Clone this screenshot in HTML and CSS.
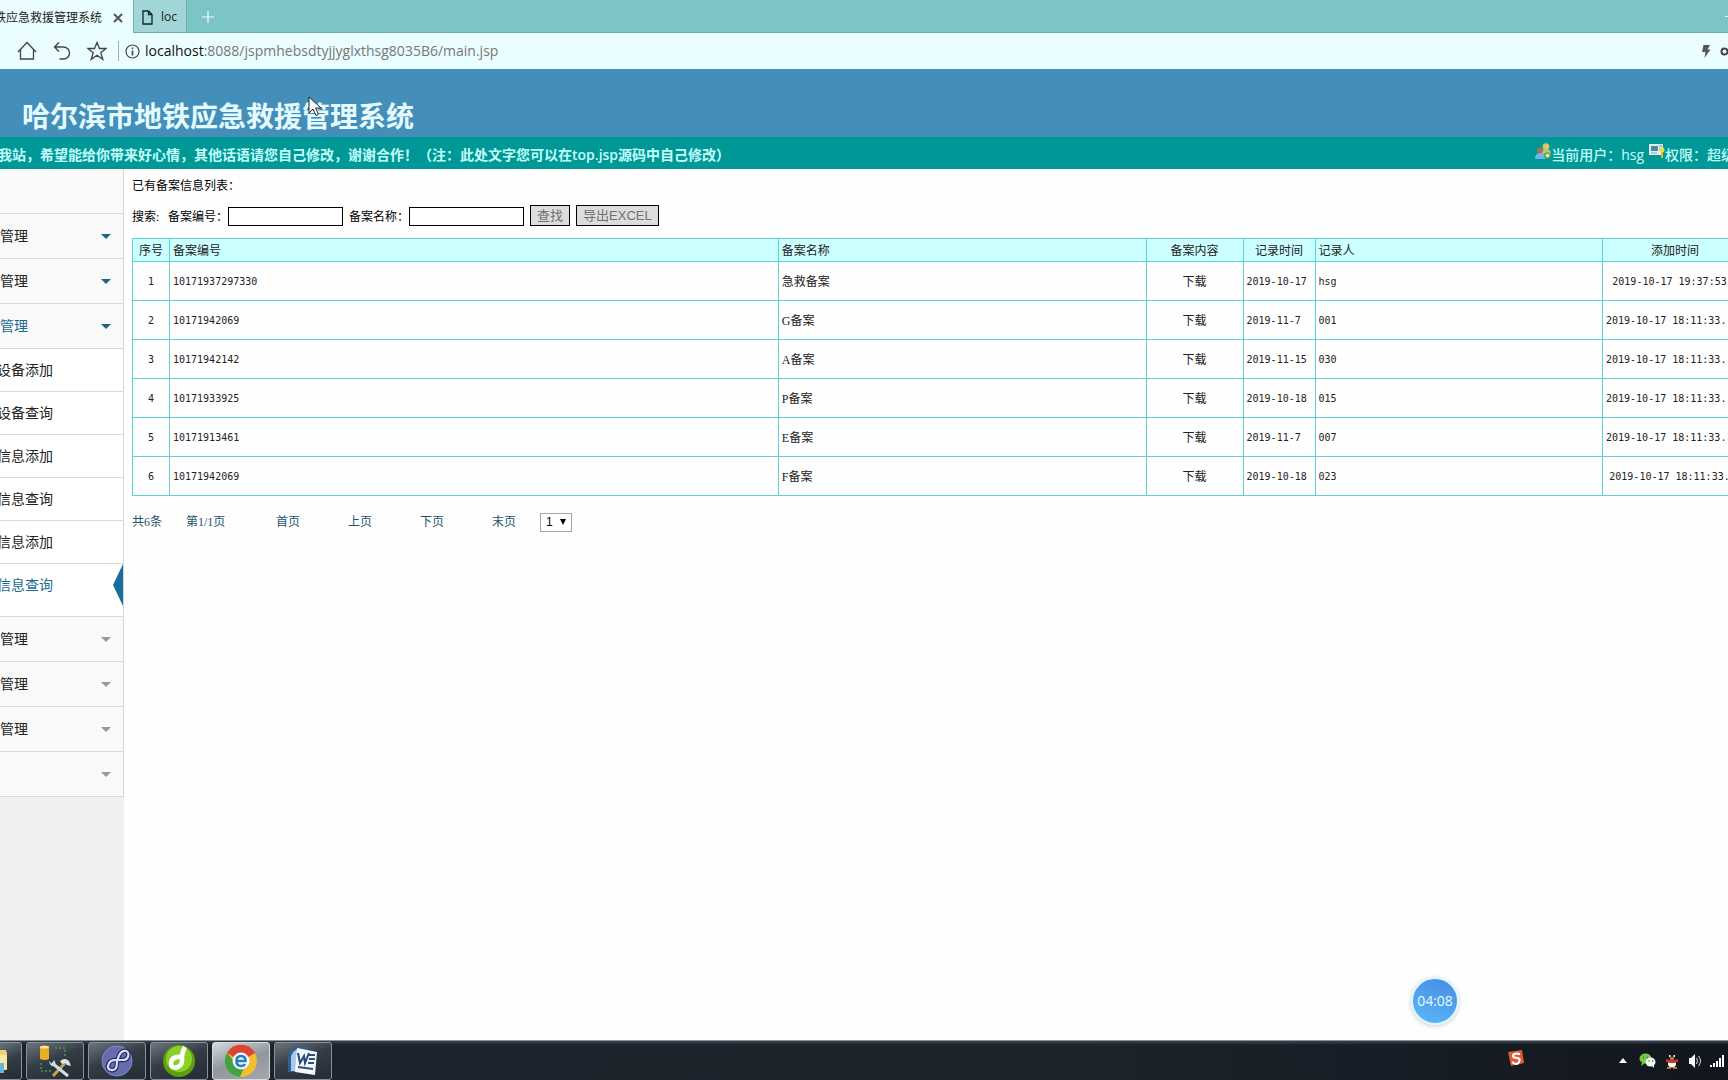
FILE: index.html
```html
<!DOCTYPE html>
<html lang="zh-CN">
<head>
<meta charset="utf-8">
<title>哈尔滨市地铁应急救援管理系统</title>
<link rel="stylesheet" href="styles.css">
</head>
<body>
<div class="tabs">
  <div class="tab tab-active"><span>铁应急救援管理系统</span>
    <button class="icon-btn" aria-label="关闭"><svg width="10" height="10" viewBox="0 0 10 10"><path d="M1 1l8 8M9 1l-8 8" stroke="#555" stroke-width="2"/></svg></button>
  </div>
  <div class="tab tab-other">
    <svg width="11" height="15" viewBox="0 0 11 15"><path d="M1 1h5.500l3.500 3.500v9.500h-9zM6.500 1v3.500h3.500" fill="none" stroke="#123" stroke-width="1.300"/></svg>
    <span>loc</span>
  </div>
  <button class="icon-btn new-tab" aria-label="新标签页"><svg width="12" height="12" viewBox="0 0 12 12"><path d="M6 0v12M0 6h12" stroke="#e8ffff" stroke-width="1.200"/></svg></button>
  <span class="win-min"></span>
</div>
<div class="toolbar">
  <button class="icon-btn" aria-label="主页"><svg width="20" height="20" viewBox="0 0 20 20"><path d="M1 11l9-9.500 9 9.500M3.500 9v9h13v-9" fill="none" stroke="#444" stroke-width="1.300"/></svg></button>
  <button class="icon-btn" aria-label="返回"><svg width="20" height="20" viewBox="0 0 20 20"><path d="M7 1.500l-4.500 4.500 4.500 4.500M3 6h8.500a6 6 0 0 1 0 12h-4" fill="none" stroke="#444" stroke-width="1.400"/></svg></button>
  <button class="icon-btn" aria-label="收藏"><svg width="20" height="20" viewBox="0 0 20 20"><path d="M10 1.500l2.500 6h6.500l-5.200 4.200 2 6.600-5.800-4-5.800 4 2-6.600L1 7.500h6.500z" fill="none" stroke="#444" stroke-width="1.300"/></svg></button>
  <div class="address">
    <svg width="15" height="15" viewBox="0 0 15 15"><circle cx="7.500" cy="7.500" r="6.500" fill="none" stroke="#444" stroke-width="1.200"/><path d="M7.500 6.500v5M7.500 3.500v1.600" stroke="#444" stroke-width="1.600"/></svg>
    <span class="url"><b>localhost</b>:8088/jspmhebsdtyjjyglxthsg8035B6/main.jsp</span>
  </div>
  <div class="extensions">
    <svg width="10" height="15" viewBox="0 0 10 15"><path d="M2.500 1h6.500l-2.500 4.500h3l-6 8.500 1-6h-3.500z" fill="#555"/></svg>
    <svg width="9" height="9" viewBox="0 0 9 9"><circle cx="4.500" cy="4.500" r="3" fill="none" stroke="#444" stroke-width="2"/></svg>
  </div>
</div>
<header class="banner"><h1>哈尔滨市地铁应急救援管理系统</h1></header>
<div class="notice">
  <p class="welcome">我站，希望能给你带来好心情，其他话语请您自己修改，谢谢合作<span class="punct">！</span>（注<span class="punct">：</span>此处文字您可以在top.jsp源码中自己修改）</p>
  <p class="user">
    <svg width="16" height="17" viewBox="0 0 16 17"><circle cx="11" cy="3.500" r="3.300" fill="#dcc46a"/><path d="M6 11q0-5 5-5t5 5z" fill="#c9c078"/><circle cx="5" cy="7.500" r="3" fill="#ad7048"/><path d="M0 16q0-6 5-6t5 6z" fill="#6db3ee"/><circle cx="12.500" cy="12.500" r="3.300" fill="#5c9e43"/><path d="M12.500 10.500v4M10.500 12.500h4" stroke="#fff" stroke-width="1.300"/></svg><span>当前用户<span class="punct">：</span>hsg</span>
    <svg class="perm" width="16" height="17" viewBox="0 0 16 17"><path d="M0 1h14v11h-14z" fill="#e0f0f4"/><path d="M2 3h7v5h-7z" fill="#4c87a8"/><path d="M2 10h6" stroke="#8aa"/><path d="M10 3h3M10 6h2" stroke="#698"/><circle cx="13" cy="7" r="2.500" fill="#f3dc45"/><path d="M12 9h2v6h-2z" fill="#e4bd23"/></svg><span>权限<span class="punct">：</span>超级</span>
  </p>
</div>
<div class="body">
  <nav class="side">
    <ul class="menu">
      <li class="group"></li>
      <li class="group open"><a href="#">管理</a></li>
      <li class="group open"><a href="#">管理</a></li>
      <li class="group open current"><a href="#">管理</a></li>
      <li class="sub"><a href="#">设备添加</a></li>
      <li class="sub"><a href="#">设备查询</a></li>
      <li class="sub"><a href="#">信息添加</a></li>
      <li class="sub"><a href="#">信息查询</a></li>
      <li class="sub"><a href="#">信息添加</a></li>
      <li class="sub current last"><a href="#">信息查询</a></li>
      <li class="group shut"><a href="#">管理</a></li>
      <li class="group shut"><a href="#">管理</a></li>
      <li class="group shut"><a href="#">管理</a></li>
      <li class="group shut"></li>
    </ul>
  </nav>
  <main>
    <p class="list-title">已有备案信息列表：</p>
    <form class="search">
      <span class="lead">搜索:</span>
      <label for="bh">备案编号：</label><input id="bh" type="text">
      <label for="mc">备案名称：</label><input id="mc" type="text">
      <button type="button">查找</button>
      <button type="button">导出EXCEL</button>
    </form>
    <table>
      <colgroup><col class="c-no"><col class="c-code"><col><col class="c-file"><col class="c-date"><col class="c-person"><col class="c-time"></colgroup>
      <thead><tr><th class="mid">序号</th><th>备案编号</th><th>备案名称</th><th class="mid">备案内容</th><th class="mid">记录时间</th><th>记录人</th><th class="mid">添加时间</th></tr></thead>
      <tbody>
        <tr><td class="num mid">1</td><td class="num">10171937297330</td><td>急救备案</td><td class="mid"><a href="#">下载</a></td><td class="num">2019-10-17</td><td class="num">hsg</td><td class="num mid stamp">2019-10-17 19:37:53</td></tr>
        <tr><td class="num mid">2</td><td class="num">10171942069</td><td>G备案</td><td class="mid"><a href="#">下载</a></td><td class="num">2019-11-7</td><td class="num">001</td><td class="num">2019-10-17 18:11:33.</td></tr>
        <tr><td class="num mid">3</td><td class="num">10171942142</td><td>A备案</td><td class="mid"><a href="#">下载</a></td><td class="num">2019-11-15</td><td class="num">030</td><td class="num">2019-10-17 18:11:33.</td></tr>
        <tr><td class="num mid">4</td><td class="num">10171933925</td><td>P备案</td><td class="mid"><a href="#">下载</a></td><td class="num">2019-10-18</td><td class="num">015</td><td class="num">2019-10-17 18:11:33.</td></tr>
        <tr><td class="num mid">5</td><td class="num">10171913461</td><td>E备案</td><td class="mid"><a href="#">下载</a></td><td class="num">2019-11-7</td><td class="num">007</td><td class="num">2019-10-17 18:11:33.</td></tr>
        <tr><td class="num mid">6</td><td class="num">10171942069</td><td>F备案</td><td class="mid"><a href="#">下载</a></td><td class="num">2019-10-18</td><td class="num">023</td><td class="num mid stamp">2019-10-17 18:11:33.</td></tr>
      </tbody>
    </table>
    <div class="pager">
      <span class="total">共6条</span><span class="page-no">第1/1页</span>
      <a href="#">首页</a><a href="#">上页</a><a href="#">下页</a><a href="#">末页</a>
      <span class="page-pick"><select aria-label="页码"><option>1</option></select></span>
    </div>
  </main>
</div>
<footer class="taskbar">
  <button class="task task-first" aria-label="资源管理器"><svg width="10" height="30" viewBox="0 0 10 30"><path d="M0 4h8l1 3v17h-9z" fill="#eed37c"/><path d="M0 9h9v14h-9z" fill="#f8e8aa"/><path d="M0 17h6v10h-6z" fill="#65b6d8"/></svg></button>
  <button class="task" aria-label="工具"><svg width="36" height="34" viewBox="0 0 36 34"><path d="M3 3h9v12q-4 2-9 0z" fill="#e9ae27"/><ellipse cx="7.500" cy="3" rx="4.500" ry="1.500" fill="#ffe28b"/><path d="M18 4h10v8M4 19v8h10" fill="none" stroke="#4a9b40" stroke-width="1.500" stroke-dasharray="2 2"/><path d="M16 32l12-13" stroke="#c4a24c" stroke-width="3"/><path d="M15 19l16 13" stroke="#cfe0ed" stroke-width="3"/><path d="M23 17q5-4 9 0l2 5-4-1-2-2-3 1z" fill="#d6e4ec"/><path d="M12 17l3 3 2-4q3 4 0 6-4 1-5-5z" fill="#cfe0ed"/></svg></button>
  <button class="task" aria-label="开发工具"><svg width="34" height="34" viewBox="0 0 34 34"><circle cx="17" cy="17" r="15" fill="#656cae" stroke="#858dce"/><path d="M17 18C19 9 22 6 26 7s3 9-3 9-9-1-12 1-5 8 0 9 6-3 6-8z" fill="none" stroke="#252c61" stroke-width="4.500"/><path d="M17 18C19 9 22 6 26 7s3 9-3 9-9-1-12 1-5 8 0 9 6-3 6-8z" fill="none" stroke="#d5dbf5" stroke-width="2.200"/></svg></button>
  <button class="task" aria-label="Dreamweaver"><svg width="34" height="34" viewBox="0 0 34 34"><circle cx="17" cy="17" r="16" fill="#5ea00b"/><circle cx="17" cy="15" r="13" fill="#8bd028"/><path d="M23 3q-3 5-3 11M19 13q-9-1-10 6 0 6 7 4 5-2 4-10" fill="none" stroke="#fff" stroke-width="4.500"/></svg></button>
  <button class="task task-active" aria-label="浏览器"><svg width="34" height="34" viewBox="0 0 34 34"><circle cx="17" cy="17" r="16" fill="#f1be32"/><path d="M17 17L3 9A16 16 0 0 1 31 9z" fill="#dc4534"/><path d="M3 9A16 16 0 0 0 16 33l5-12-11-4z" fill="#43a344"/><path d="M17 9h14l-1-2-6-5z" fill="#dc4534"/><circle cx="17" cy="17" r="8.500" fill="#eef6fb"/><path d="M12.500 17h9q0-5-4.500-5t-4.500 5 4.500 5q3 0 4-2" fill="none" stroke="#267fb9" stroke-width="2.500"/></svg></button>
  <button class="task" aria-label="Word"><svg width="34" height="34" viewBox="0 0 34 34"><path d="M2 28V12Q4 2 14 3h8v25z" fill="#326093"/><path d="M5 27V13q2-8 9-8L10 27z" fill="#a9c9e8"/><path d="M11 4l20 4-2 23-20-3z" fill="#f4f8fc"/><path d="M23 11h6M23 15h6M22 19h6M12 23l15 2" stroke="#2c4f82" stroke-width="2"/><path d="M12 9l2 10 4-7 1 7 4-10" fill="none" stroke="#244878" stroke-width="2"/></svg></button>
  <div class="tray">
    <svg class="ime" width="18" height="18" viewBox="0 0 18 18"><path d="M1 3l14-2 2 13-13 3z" fill="#dc5c35"/><path d="M13 5q-7-1-7 1.500t4 2.500 2 4-7 0" fill="none" stroke="#fff" stroke-width="2.200"/></svg>
    <svg class="more" width="8" height="5" viewBox="0 0 8 5"><path d="M0 5l4-5 4 5z" fill="#fff"/></svg>
    <svg width="17" height="15" viewBox="0 0 17 15"><ellipse cx="6.500" cy="5.500" rx="6" ry="5" fill="#75cb44"/><path d="M3 9l-1 4 4-3z" fill="#75cb44"/><ellipse cx="11.500" cy="9" rx="5" ry="4.500" fill="#eef6ee"/><path d="M12 12l3 3v-4z" fill="#eef6ee"/><path d="M4 4.500h1M8 4.500h1M9.500 8h1M13 8h1" stroke="#365" stroke-width="1.500"/></svg>
    <svg width="16" height="17" viewBox="0 0 16 17"><path d="M4 7q-1-7 4-7t4 7l3 6-3 1q-4 3-8 0l-3-1z" fill="#151515"/><ellipse cx="8" cy="11.500" rx="4" ry="4" fill="#fff"/><path d="M2 7q6 2 12 0v3q-6 2-12 0z" fill="#c62f25"/><path d="M5 4h1.500M9.500 4H11" stroke="#fff" stroke-width="2"/><path d="M6 6h4M3 16h4M9 16h4" stroke="#eb9c29" stroke-width="1.600"/></svg>
    <svg width="14" height="14" viewBox="0 0 14 14"><path d="M1 4h2l4-4v14l-4-4h-2z" fill="#fff"/><path d="M8.500 4q2 3 0 6M10.500 2q4 5 0 10" fill="none" stroke="#ddd"/></svg>
    <svg width="15" height="12" viewBox="0 0 15 12"><path d="M1 10v2M4 8v4M7 6v6M10 3v9M13 0v12" stroke="#fff" stroke-width="2"/></svg>
  </div>
</footer>
<div class="timer">04:08</div>
<svg class="cursor" width="14" height="21" viewBox="0 0 14 21"><path d="M1 1v16l4-4 3 6.500 2.500-1.200-3-6.300h5.500z" fill="#fff" stroke="#223" stroke-width="1"/></svg>
</body>
</html>
```
FILE: styles.css
```css
* { box-sizing: border-box; }
body {
  margin: 0;
  min-height: 100vh;
  display: flex;
  flex-direction: column;
  overflow: hidden;
  background: #fefefe;
  color: #222;
  font: 12px/18px "Liberation Serif", "Noto Sans CJK SC", sans-serif;
}
p, h1, ul { margin: 0; padding: 0; }
a { color: inherit; text-decoration: none; }
svg { display: block; flex: none; }
.icon-btn { padding: 0; border: 0; background: none; }
.punct { font-family: "Noto Sans CJK JP", sans-serif; }

/* browser tabs */
.tabs {
  display: flex;
  height: 33px;
  background: #7cc5c5;
  border-bottom: 1px solid #6faead;
  font-family: "Open Sans", "Noto Sans CJK SC", sans-serif;
}
.tab { display: flex; align-items: center; padding-top: 2px; }
.tab-active {
  height: 33px;
  width: 139px;
  margin-left: -6px;
  gap: 11px;
  background: #eafeff;
  white-space: nowrap;
}
.tab-other {
  width: 54px;
  padding-left: 8px;
  gap: 8px;
  background: #a0d6d5;
  border: solid #6faead;
  border-width: 0 1px;
}
.new-tab { margin-left: 15px; padding-top: 2px; }
.win-min { width: 3px; height: 1px; margin: 16px 0 0 auto; background: #fff; }

/* address bar */
.toolbar {
  display: flex;
  align-items: center;
  height: 36px;
  padding-left: 17px;
  gap: 15px;
  background: #eafeff;
}
.address {
  display: flex;
  align-items: center;
  flex: 1;
  gap: 5px;
  height: 20px;
  margin-left: -4px;
  padding-left: 6px;
  border-left: 1px solid #aaa;
}
.url { font: 14px/20px "Open Sans", sans-serif; color: #777; }
.url b { font-weight: 400; color: #111; }
.extensions { display: flex; align-items: center; gap: 9px; margin-right: -1px; }

/* site header */
.banner {
  height: 68px;
  padding: 26px 0 0 22px;
  background: #448eba;
}
.banner h1 {
  font: 600 28px/40px "Noto Sans CJK SC", sans-serif;
  color: #e4fbff;
  white-space: nowrap;
}
.notice {
  display: flex;
  justify-content: space-between;
  align-items: center;
  height: 32px;
  padding-top: 2px;
  overflow: hidden;
  background: #009896;
  color: #c4ffff;
  font: 14px/20px "Open Sans", "Noto Sans CJK SC", sans-serif;
  white-space: nowrap;
}
.welcome { font-weight: 600; margin-left: -2px; }
.user { display: flex; align-items: center; margin-right: -7px; font-weight: 500; }
.user svg { margin-bottom: 6px; }
.perm { margin-left: 5px; }

.body { display: flex; flex: 1; }

/* side menu */
.side {
  width: 124px;
  flex: none;
  overflow: hidden;
  background: #f0f0f0;
  font: 14px/20px "Noto Sans CJK SC", sans-serif;
}
.menu {
  list-style: none;
  margin-left: -3px;
  border-right: 1px solid #d5d5d5;
}
.menu li {
  display: flex;
  align-items: center;
  position: relative;
  border-bottom: 1px solid #d9d9d9;
}
.menu a { padding-bottom: 2px; }
.menu .group { height: 45px; padding: 0 12px 0 3px; background: #f9f9f9; }
.menu .sub { height: 43px; background: #fff; }
.menu .last { height: 53px; padding-bottom: 10px; }
.menu .current { color: #1c6b8f; }
.open::after, .shut::after {
  content: "";
  margin-left: auto;
  border: 5px solid transparent;
  border-top-color: #1f6482;
  border-bottom: 0;
}
.shut::after { border-top-color: #999; }
.last::after {
  content: "";
  position: absolute;
  right: 0;
  top: 0;
  border: solid transparent;
  border-width: 21px 10px 21px 0;
  border-right-color: #176d9c;
}

/* list page */
main { flex: 1; min-width: 0; overflow: hidden; padding: 8px 0 0 8px; }
.list-title { color: #000; }
.search {
  display: flex;
  align-items: flex-end;
  height: 31px;
  color: #000;
}
.lead { width: 36px; }
.search input {
  width: 115px;
  height: 19px;
  margin-right: 6px;
  border: 1px solid #000;
  background: #fff;
}
.search button {
  height: 21px;
  margin-right: 6px;
  padding: 0 6px;
  border: 1px solid #000;
  background: #ddd;
  color: #707070;
  font: 13px/18px "Liberation Sans", "Noto Sans CJK SC", sans-serif;
}
table {
  width: calc(100% + 20px);
  margin-top: 12px;
  table-layout: fixed;
  border-collapse: collapse;
}
.c-no { width: 37px; }
.c-code { width: 37.7%; }
.c-file { width: 97px; }
.c-date { width: 72px; }
.c-person { width: 17.8%; }
.c-time { width: 145px; }
th, td {
  height: 39px;
  padding: 2px 3px 0;
  border: 1px solid #5fd3d3;
  text-align: left;
  font-weight: 400;
  white-space: nowrap;
}
th { height: 23px; background: #ccffff; }
.mid { text-align: center; }
.num { font-family: "DejaVu Sans Mono", monospace; font-size: 10px; }
.stamp { padding-right: 14px; }
.pager { display: flex; align-items: center; gap: 48px; margin-top: 16px; height: 20px; color: #24506a; }
.total { margin-right: -24px; }
.page-no { min-width: 42px; }
.page-pick { position: relative; margin-left: -24px; }
.page-pick::after {
  content: "";
  position: absolute;
  right: 6px;
  top: 6px;
  border: 3px solid transparent;
  border-top: 6px solid #000;
  border-bottom: 0;
  pointer-events: none;
}
.page-pick select {
  display: block;
  appearance: none;
  width: 32px;
  height: 19px;
  padding: 0 5px;
  border: 1px solid #a5a5a5;
  background: #fff;
  color: #000;
  font: 12px/16px "Liberation Sans", sans-serif;
}

/* desktop taskbar */
.taskbar {
  display: flex;
  align-items: center;
  gap: 4px;
  height: 40px;
  overflow: hidden;
  border-top: 1px solid #8b939a;
  background: linear-gradient(#39434b, transparent 4px), linear-gradient(90deg, #1b222b, #1c242c 60%, #12161f);
}
.task {
  display: flex;
  align-items: center;
  justify-content: center;
  flex: none;
  width: 58px;
  height: 38px;
  padding: 0;
  border: 1px solid #8a9199;
  border-radius: 3px;
  background: linear-gradient(160deg, #6c747b, #343c46 45%, #232b35);
}
.task-first { width: 25px; margin-left: -3px; justify-content: flex-start; }
.task-active { background: linear-gradient(160deg, #d6dadc, #91979c 50%, #a4a8ac); border-color: #d8dcde; }
.tray { display: flex; align-items: center; gap: 8px; margin: 0 3px 0 auto; }
.more { margin-right: 4px; }
.ime { margin: -6px 86px 0 0; }

/* floating items */
.timer {
  position: absolute;
  right: 269px;
  bottom: 55px;
  width: 48px;
  height: 48px;
  border: 2px solid #dcf9ff;
  border-radius: 50%;
  background: linear-gradient(20deg, #5cb8f8, #478be4);
  box-shadow: 0 1px 4px #ccc;
  color: #e8fbff;
  font: 14px/44px "Open Sans", sans-serif;
  text-align: center;
}
.cursor { position: absolute; left: 308px; top: 96px; }
```
